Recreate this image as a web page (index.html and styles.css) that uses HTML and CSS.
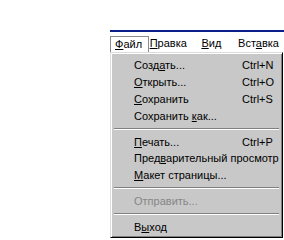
FILE: index.html
```html
<!DOCTYPE html>
<html lang="ru">
<head>
<meta charset="utf-8">
<link rel="stylesheet" href="styles.css">
</head>
<body>
<div class="app">
  <div class="titlebar"></div>
  <div class="menubar">
    <span class="top active"><u>Ф</u>айл</span>
    <span class="top pravka"><u>П</u>равка</span>
    <span class="top vid"><u>В</u>ид</span>
    <span class="top"><span>Вст<u>а</u>вка</span></span>
  </div>
  <div class="dropdown">
    <div class="item"><span class="label">Созд<u>а</u>ть...</span><span class="key">Ctrl+N</span></div>
    <div class="item"><span class="label"><u>О</u>ткрыть...</span><span class="key">Ctrl+O</span></div>
    <div class="item"><span class="label"><u>С</u>охранить</span><span class="key">Ctrl+S</span></div>
    <div class="item"><span class="label">Сохранить <u>к</u>ак...</span></div>
    <div class="sep"></div>
    <div class="item"><span class="label"><u>П</u>ечать...</span><span class="key">Ctrl+P</span></div>
    <div class="item"><span class="label wide">Пред<u>в</u>арительный просмотр</span></div>
    <div class="item"><span class="label"><u>М</u>акет страницы...</span></div>
    <div class="sep"></div>
    <div class="item disabled"><span class="label">Отправить...</span></div>
    <div class="sep"></div>
    <div class="item"><span class="label">В<u>ы</u>ход</span></div>
  </div>
</div>
</body>
</html>
```
FILE: styles.css
```css
html, body {
  margin: 0;
  padding: 0;
  background: #ffffff;
  overflow: hidden;
}
.app {
  width: 284px;
  height: 240px;
  padding-top: 30px;
  padding-left: 110px;
  box-sizing: border-box;
  display: flex;
  flex-direction: column;
  font-family: "Liberation Sans", Arial, sans-serif;
  font-size: 11px;
  color: #000;
}
.titlebar {
  height: 2px;
  background: #0a1e8c;
}
.menubar {
  height: 20px;
  display: flex;
  align-items: flex-end;
  background: #ffffff;
}
.top {
  height: 16px;
  line-height: 15px;
  padding: 0 5px;
  box-sizing: border-box;
  white-space: nowrap;
}
.top.active {
  width: 40px;
  border: 1px solid #8c8c8c;
  border-bottom: none;
  padding-left: 4px;
}
.pravka { width: 54px; padding-left: 1px; }
.vid { width: 34px; padding-left: 1px; }
.dropdown {
  width: 173px;
  height: 186px;
  box-sizing: border-box;
  background: #c8c8c8;
  border-top: 1px solid #dcdcdc;
  border-left: 1px solid #dcdcdc;
  border-right: 1px solid #000;
  border-bottom: 1px solid #000;
  box-shadow: inset 1px 1px 0 #ffffff, inset -1px -1px 0 #808080;
  padding: 4px 2px 2px 2px;
  display: flex;
  flex-direction: column;
}
.item {
  height: 17px;
  display: flex;
  align-items: center;
  padding-left: 21px;
  white-space: nowrap;
}
.label {
  flex: 0 0 108px;
}
.label.wide {
  flex: none;
}
.key {
  flex: none;
}
.disabled {
  color: #868686;
}
.sep {
  height: 9px;
  display: flex;
  flex-direction: column;
  justify-content: center;
}
.sep::before {
  content: "";
  height: 1px;
  background: #808080;
  border-bottom: 1px solid #ffffff;
  margin: 0 1px;
}
u {
  text-decoration: underline;
  text-underline-offset: 1px;
}
```
